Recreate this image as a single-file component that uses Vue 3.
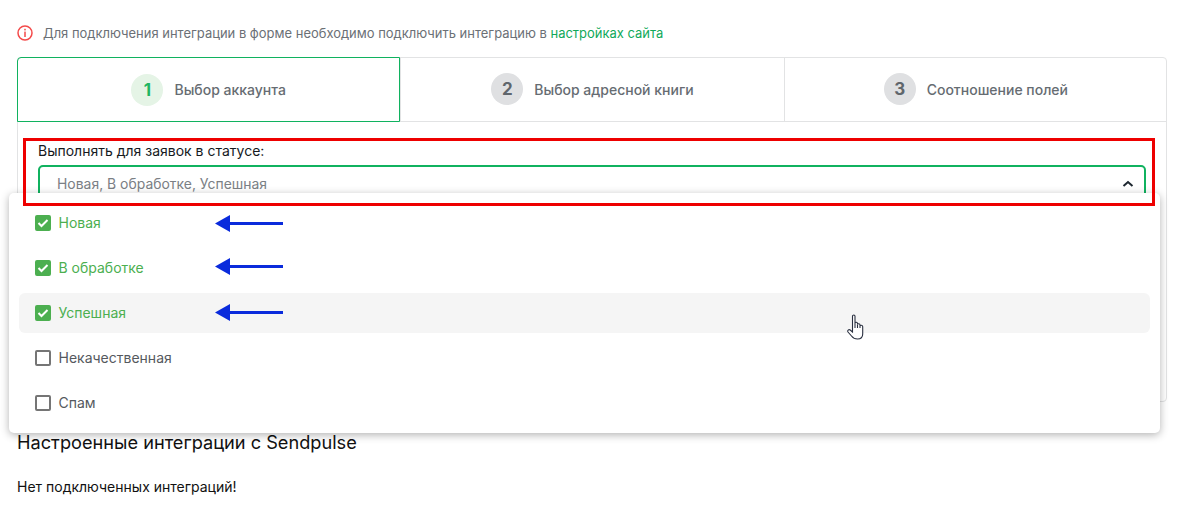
<template>
  <div class="page">
    <div class="notice">
      <svg class="notice-icon" width="16" height="16" viewBox="0 0 16 16" fill="none">
        <circle cx="8" cy="8" r="7" stroke="#f44a4a" stroke-width="1.5" />
        <rect x="7.25" y="3.8" width="1.5" height="1.6" fill="#f44a4a" />
        <rect x="7.25" y="6.6" width="1.5" height="5.4" fill="#f44a4a" />
      </svg>
      <span>Для подключения интеграции в форме необходимо подключить интеграцию в <a class="link">настройках сайта</a></span>
    </div>

    <div class="card">
      <div class="tabs">
        <div v-for="(tab, i) in tabs" :key="tab" class="tab" :class="{ active: i === 0 }">
          <span class="tab-num">{{ i + 1 }}</span>
          <span class="tab-title">{{ tab }}</span>
        </div>
      </div>

      <div class="card-body">
        <div class="field-label">Выполнять для заявок в статусе:</div>
        <div class="select">
          <span>Новая, В обработке, Успешная</span>
          <svg class="chevron" width="12" height="8" viewBox="0 0 12 8" fill="none">
            <path d="M1.5 6 L6 2 L10.5 6" stroke="#1d2730" stroke-width="2" />
          </svg>
        </div>
      </div>

      <div class="dropdown">
        <div
          v-for="(item, i) in statuses"
          :key="item.name"
          class="option"
          :class="{ checked: item.checked, hover: i === 2 }"
        >
          <span class="box">
            <svg v-if="item.checked" width="12" height="10" viewBox="0 0 12 10" fill="none">
              <path d="M1.5 5 L4.5 8 L10.5 2" stroke="#fff" stroke-width="2" />
            </svg>
          </span>
          <span class="option-name">{{ item.name }}</span>
        </div>
      </div>

      <div class="highlight"></div>
      <div v-for="y in arrows" :key="y" class="arrow" :style="{ top: y + 'px' }">
        <svg width="68" height="17" viewBox="0 0 68 17">
          <path d="M0 8.5 L15 0 V7 H68 V10 H15 V17 Z" fill="#0a2bdc" />
        </svg>
      </div>
      <svg class="cursor" width="18" height="26" viewBox="0 0 18 26" fill="#fff" stroke="#2a3040" stroke-width="1.1">
        <path d="M5.5 15 V2.2 C5.5 0.6 8 0.6 8 2.2 V9 C8 8 10.5 8 10.5 9.5 V10.5 C10.5 9.5 13 9.5 13 11 V12 C13 11 15.5 11 15.7 12.5 V20 C15.7 23 14 25 10.5 25 C7.5 25 6 24 4.5 22 L1 18 C0 16.5 1.8 15 3.2 16 L5.5 18 Z" />
        <path d="M8 9 V14 M10.5 10.5 V14 M13 12 V14" fill="none" />
      </svg>
    </div>

    <h3 class="list-title">Настроенные интеграции с Sendpulse</h3>
    <p class="empty">Нет подключенных интеграций!</p>
  </div>
</template>

<script setup>
const tabs = ['Выбор аккаунта', 'Выбор адресной книги', 'Соотношение полей']

const statuses = [
  { name: 'Новая', checked: true },
  { name: 'В обработке', checked: true },
  { name: 'Успешная', checked: true },
  { name: 'Некачественная', checked: false },
  { name: 'Спам', checked: false }
]

// верх стрелок относительно карточки
const arrows = [157, 200, 246]
</script>

<style>
html, body {
  margin: 0;
  background: #fff;
}
</style>

<style scoped>
.page {
  width: 1150px;
  padding: 25px 18px 0 17px;
  font-family: Inter, "Noto Sans", sans-serif;
  color: #111;
}

.notice {
  display: flex;
  align-items: center;
  gap: 10px;
  height: 16px;
  margin-bottom: 16px;
  font-size: 12.97px;
  color: #6b7076;
}

.notice-icon {
  flex: none;
}

.link {
  color: #10a95a;
}

.card {
  position: relative;
  box-sizing: border-box;
  height: 345px;
  border: 1px solid #e2e3e4;
  border-radius: 4px;
}

.tabs {
  display: grid;
  grid-template-columns: repeat(3, 1fr);
  box-sizing: border-box;
  height: 65px;
  margin: -1px -1px 0;
  border-bottom: 1px solid #e2e3e4;
}

.tab {
  display: flex;
  align-items: center;
  justify-content: center;
  gap: 11px;
  border-left: 1px solid #e2e3e4;
}

.tab:first-child {
  border-left: 0;
}

.tab.active {
  border: 1px solid #10b25f;
  border-top-left-radius: 4px;
  margin-bottom: -1px;
}

.tab-num {
  display: flex;
  align-items: center;
  justify-content: center;
  width: 32px;
  height: 32px;
  border-radius: 50%;
  background: #dfe0e2;
  color: #5f666c;
  font-size: 17px;
  font-weight: 700;
}

.active .tab-num {
  background: #e5f4e6;
  color: #20b561;
}

.tab-title {
  font-size: 14px;
  font-weight: 500;
  color: #666c72;
}

.card-body {
  padding: 21px 20px 0;
}

.field-label {
  height: 16px;
  line-height: 16px;
  font-size: 14px;
  color: #15191d;
}

.select {
  display: flex;
  align-items: center;
  justify-content: space-between;
  box-sizing: border-box;
  height: 37px;
  margin-top: 6px;
  padding: 0 10px 0 17px;
  border: 2px solid #10b25f;
  border-radius: 5px;
  font-size: 13.95px;
  color: #7b8085;
}

.chevron {
  margin-top: 1px;
}

.dropdown {
  position: absolute;
  top: 135px;
  left: -9px;
  width: 1151px;
  box-sizing: border-box;
  padding: 10px;
  background: #fff;
  border-radius: 5px;
  box-shadow: 0 2px 8px rgba(0, 0, 0, 0.3);
}

.option {
  display: flex;
  align-items: center;
  gap: 7.5px;
  height: 40px;
  padding-left: 16px;
  border-radius: 6px;
  font-size: 14px;
  color: #55595e;
}

.option + .option {
  margin-top: 5px;
}

.option.hover {
  background: #f5f5f5;
}

.option.checked {
  color: #4caf50;
}

.option-name {
  padding-bottom: 1px;
}

.box {
  display: flex;
  align-items: center;
  justify-content: center;
  box-sizing: border-box;
  width: 16px;
  height: 16px;
  border: 2px solid #757575;
  border-radius: 2px;
}

.checked .box {
  background: #4caf50;
  border-color: #4caf50;
}

.highlight {
  position: absolute;
  top: 80px;
  left: 5px;
  width: 1132px;
  height: 68px;
  box-sizing: border-box;
  border: 3px solid #ee0000;
}

.arrow {
  position: absolute;
  left: 197px;
  height: 17px;
  line-height: 0;
}

.cursor {
  position: absolute;
  top: 256px;
  left: 829px;
}

.list-title {
  margin: 30px 0 0;
  font-size: 18.2px;
  line-height: 20px;
  font-weight: 400;
  color: #111;
}

.empty {
  margin: 26px 0 0;
  font-size: 14px;
  line-height: 18px;
  color: #111;
}
</style>
